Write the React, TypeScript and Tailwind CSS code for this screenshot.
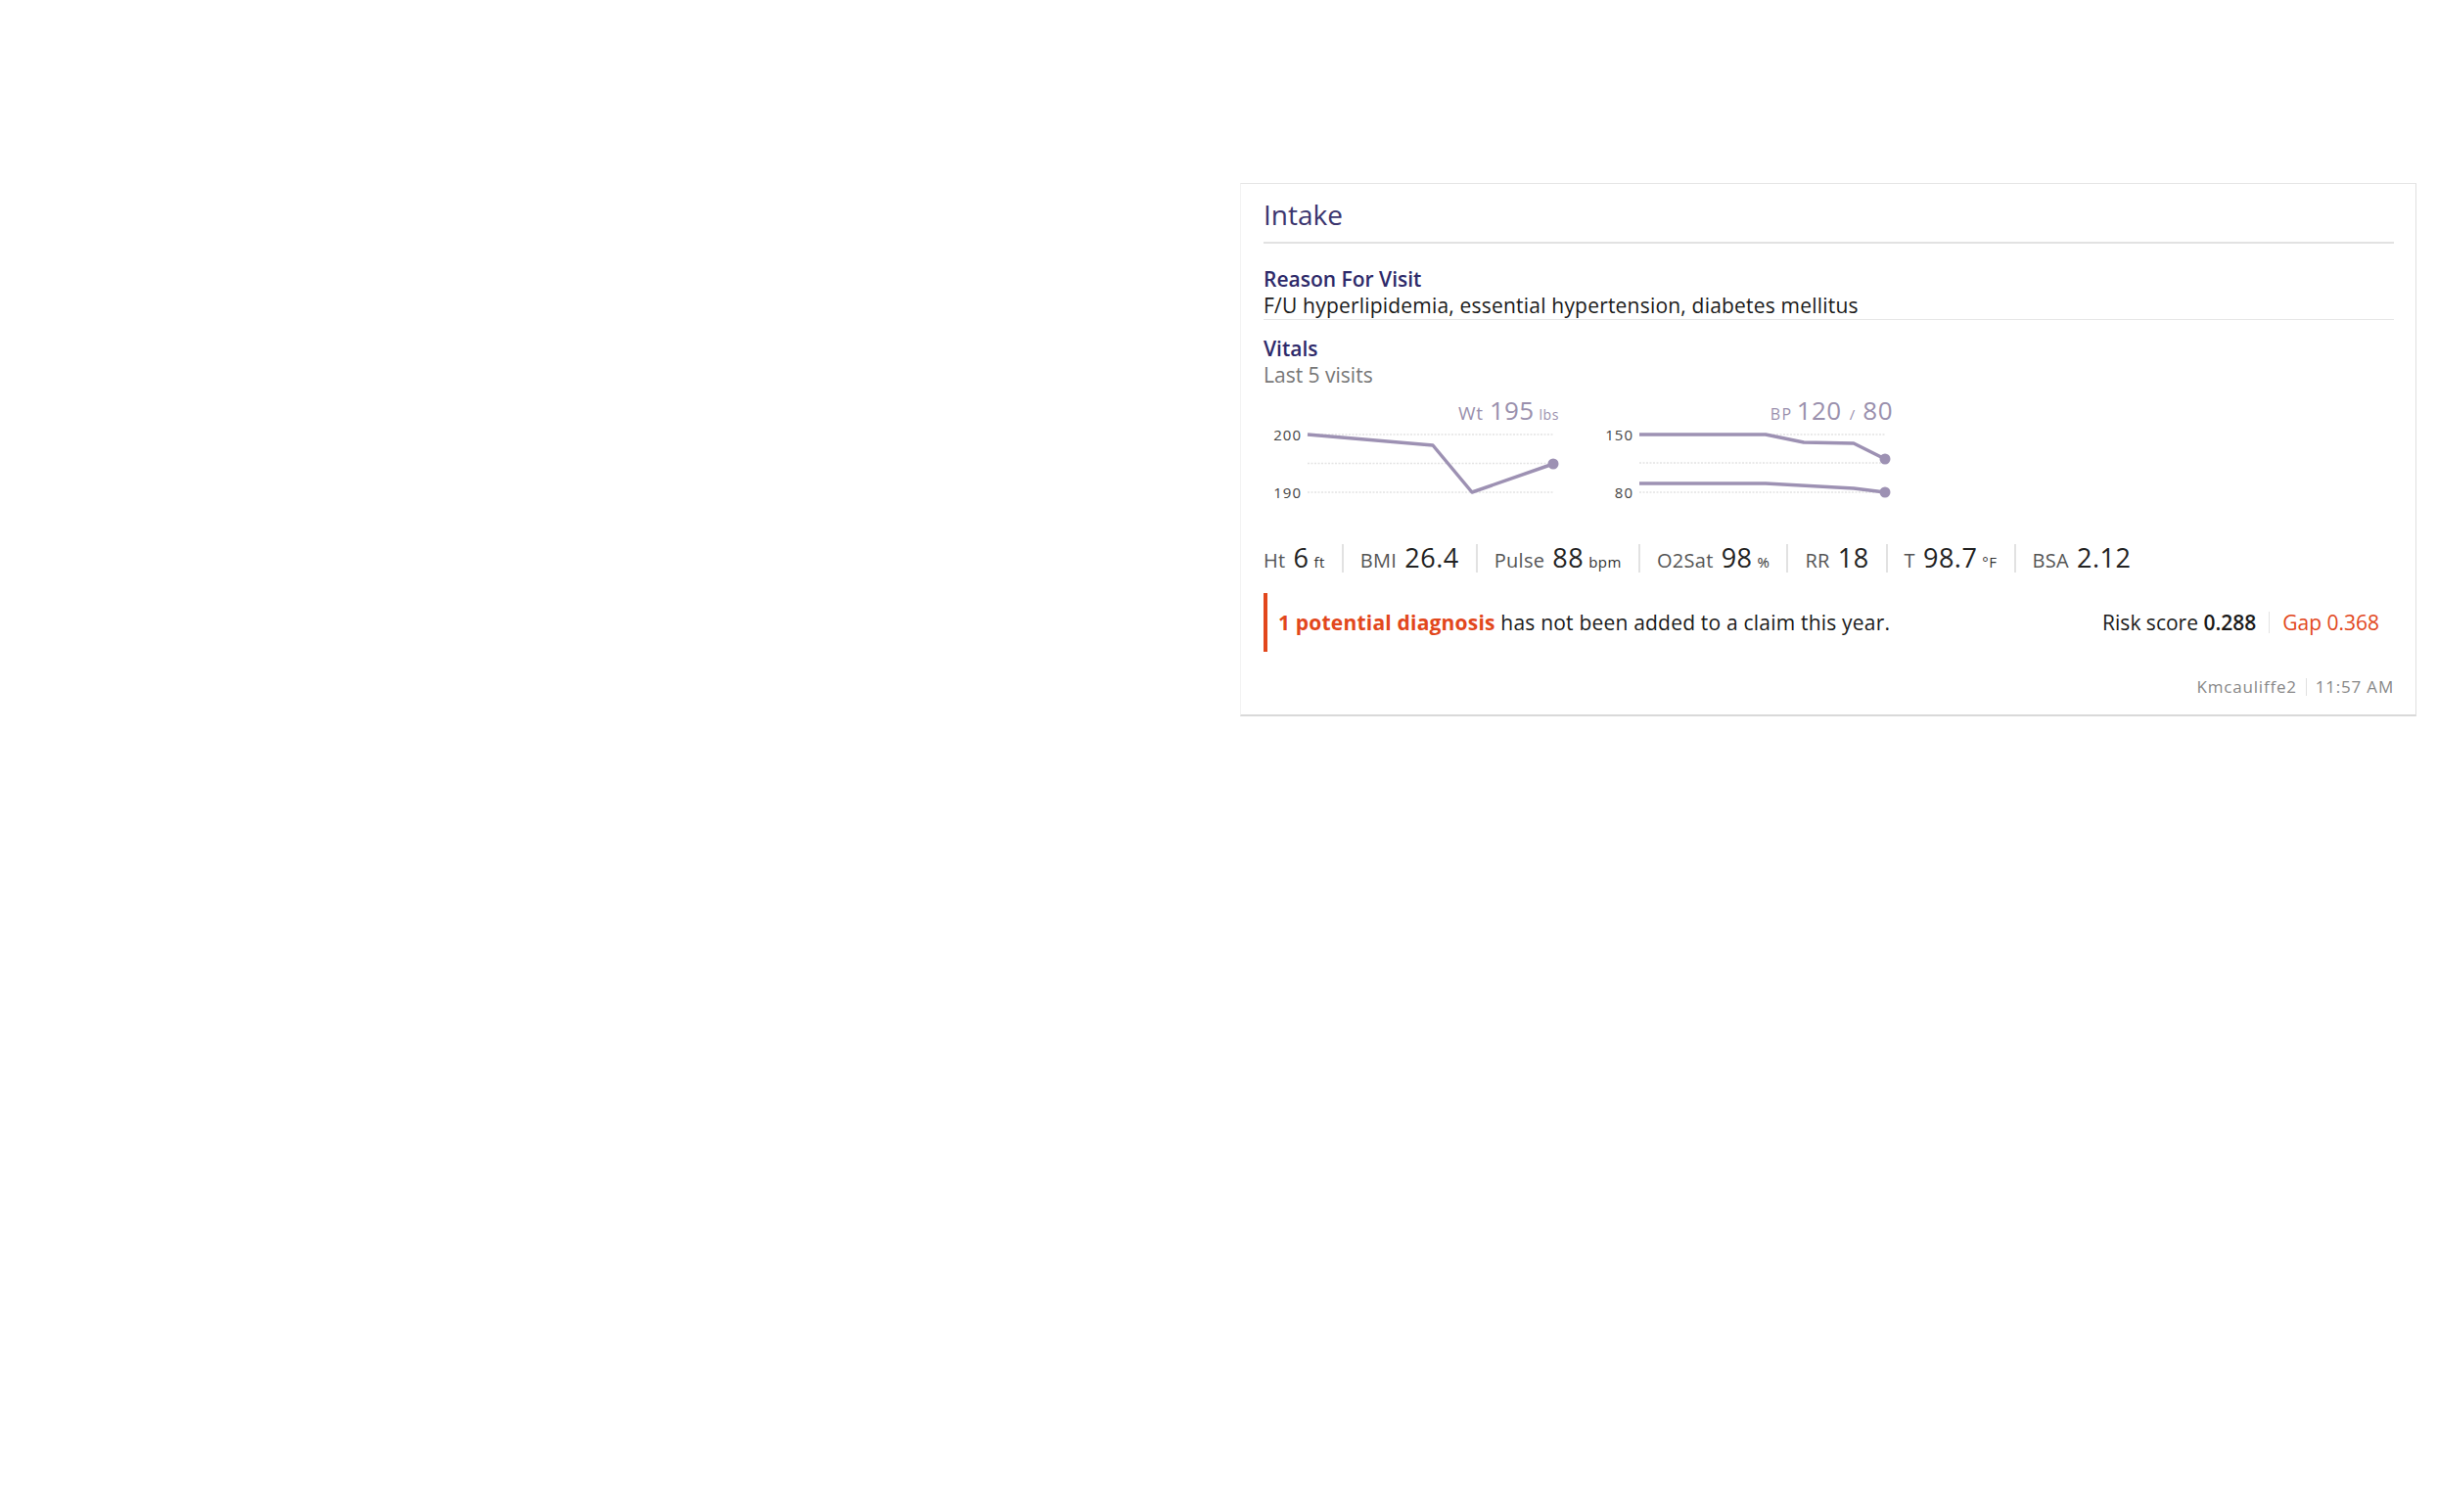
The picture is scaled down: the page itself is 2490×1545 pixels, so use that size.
import React from "react";

const FONT = { fontFamily: "'Open Sans', 'Noto Sans', sans-serif" };

function WeightChart() {
  return (
    <div className="w-[304px] flex flex-col">
      <div className="h-[28px] leading-[28px] text-right pr-[2px] text-[#9a90ad] whitespace-nowrap">
        <span className="text-[19px] tracking-[0.8px]">Wt</span>
        <span className="text-[26px] tracking-[0.3px] ml-[6px]">195</span>
        <span className="text-[14px] ml-[5px] tracking-[0.6px]">lbs</span>
      </div>
      <svg width="304" height="85" viewBox="0 0 304 85" className="block">
        <g stroke="#e4e4e4" strokeWidth="1.5" strokeDasharray="2 1.5">
          <line x1="45" y1="11" x2="296" y2="11" />
          <line x1="45" y1="40.5" x2="296" y2="40.5" />
          <line x1="45" y1="70" x2="296" y2="70" />
        </g>
        <text x="39" y="16.5" textAnchor="end" fontSize="15" letterSpacing="1" fill="#444" style={FONT}>200</text>
        <text x="39" y="75.5" textAnchor="end" fontSize="15" letterSpacing="1" fill="#444" style={FONT}>190</text>
        <polyline points="45,11 173,22 213,70 296,41" fill="none" stroke="#9d91b3" strokeWidth="3.5" strokeLinejoin="round" />
        <circle cx="296" cy="41" r="5.5" fill="#9d91b3" />
      </svg>
    </div>
  );
}

function BPChart() {
  return (
    <div className="w-[302px] ml-[38px] flex flex-col">
      <div className="h-[28px] leading-[28px] text-right pr-[1px] text-[#9a90ad] whitespace-nowrap">
        <span className="text-[16px] tracking-[1.5px]">BP</span>
        <span className="text-[26px] tracking-[0.5px] ml-[4px]">120</span>
        <span className="text-[15px] mx-[8px]">/</span>
        <span className="text-[26px] tracking-[0.5px]">80</span>
      </div>
      <svg width="302" height="85" viewBox="0 0 302 85" className="block">
        <g stroke="#e4e4e4" strokeWidth="1.5" strokeDasharray="2 1.5">
          <line x1="42" y1="11" x2="293" y2="11" />
          <line x1="42" y1="40" x2="293" y2="40" />
          <line x1="42" y1="70" x2="293" y2="70" />
        </g>
        <text x="36" y="16.5" textAnchor="end" fontSize="15" letterSpacing="1" fill="#444" style={FONT}>150</text>
        <text x="36" y="75.5" textAnchor="end" fontSize="15" letterSpacing="1" fill="#444" style={FONT}>80</text>
        <polyline points="42,11 171,11 210,19 261,20 293,36" fill="none" stroke="#9d91b3" strokeWidth="3.5" strokeLinejoin="round" />
        <polyline points="42,61 171,61 261,66 293,70" fill="none" stroke="#9d91b3" strokeWidth="3.5" strokeLinejoin="round" />
        <circle cx="293" cy="36" r="5.5" fill="#9d91b3" />
        <circle cx="293" cy="70" r="5.5" fill="#9d91b3" />
      </svg>
    </div>
  );
}

function Sep() {
  return <div className="w-[2px] h-[29px] bg-[#e2e2e2] mx-[17px]" />;
}

function Vital({ label, value, unit }: { label: string; value: string; unit?: string }) {
  return (
    <div className="flex items-baseline h-[36px] leading-[36px] whitespace-nowrap">
      <span className="text-[20px] tracking-[0.3px] text-[#555]">{label}</span>
      <span className="text-[27px] tracking-[0.5px] text-[#222] ml-[8px]">{value}</span>
      {unit && <span className="text-[15px] tracking-[0.5px] text-[#333] ml-[5px]">{unit}</span>}
    </div>
  );
}

export default function App() {
  return (
    <div className="min-h-[1545px] bg-white pl-[1267px] pt-[187px]" style={FONT}>
      <div className="w-[1202px] bg-white border-t border-t-[#e6e6e6] border-r border-r-[#e0e0e0] border-l border-l-[#f3f3f3] border-b-2 border-b-[#d9d9d9] px-[22px]">
        <div className="pt-[13px] pb-[10px] ml-[1px]">
          <div className="text-[28px] leading-[36px] text-[#3b356e]">Intake</div>
        </div>
        <div className="h-[2px] bg-[#e2e2e2] ml-[1px]" />

        <div className="mt-[23px] ml-[1px]">
          <div className="text-[21px] leading-[27px] font-semibold text-[#2e2a6a]">Reason For Visit</div>
          <div className="text-[21px] leading-[27px] tracking-[0.2px] text-[#1a1a1a]">F/U hyperlipidemia, essential hypertension, diabetes mellitus</div>
        </div>
        <div className="h-px bg-[#e6e6e6] ml-[1px]" />

        <div className="mt-[16px] ml-[1px]">
          <div className="text-[21px] leading-[27px] font-semibold text-[#2e2a6a]">Vitals</div>
          <div className="text-[21px] leading-[27px] text-[#777]">Last 5 visits</div>
        </div>

        <div className="mt-[8px] ml-[1px] flex">
          <WeightChart />
          <BPChart />
        </div>

        <div className="mt-[34px] ml-[1px] flex items-center">
          <Vital label="Ht" value="6" unit="ft" />
          <Sep />
          <Vital label="BMI" value="26.4" />
          <Sep />
          <Vital label="Pulse" value="88" unit="bpm" />
          <Sep />
          <Vital label="O2Sat" value="98" unit="%" />
          <Sep />
          <Vital label="RR" value="18" />
          <Sep />
          <Vital label="T" value="98.7" unit="°F" />
          <Sep />
          <Vital label="BSA" value="2.12" />
        </div>

        <div className="mt-[18px] ml-[1px] h-[60px] border-l-4 border-l-[#e2471c] pl-[11px] pr-[15px] flex items-center justify-between text-[21px] leading-[28px]">
          <div className="text-[#1a1a1a] whitespace-nowrap tracking-[0.2px]">
            <span className="font-bold text-[#e2471c]">1 potential diagnosis</span> has not been added to a claim this year.
          </div>
          <div className="flex items-center whitespace-nowrap">
            <span className="text-[#1a1a1a]">Risk score <span className="font-semibold">0.288</span></span>
            <div className="w-px h-[22px] bg-[#e3e3e3] mx-[13px]" />
            <span className="text-[#e2471c]">Gap 0.368</span>
          </div>
        </div>

        <div className="mt-[26px] pb-[18px] flex justify-end items-center text-[17px] tracking-[0.8px] leading-[20px] text-[#888]">
          <span>Kmcauliffe2</span>
          <div className="w-px h-[18px] bg-[#e0e0e0] mx-[9px]" />
          <span>11:57 AM</span>
        </div>
      </div>
    </div>
  );
}
